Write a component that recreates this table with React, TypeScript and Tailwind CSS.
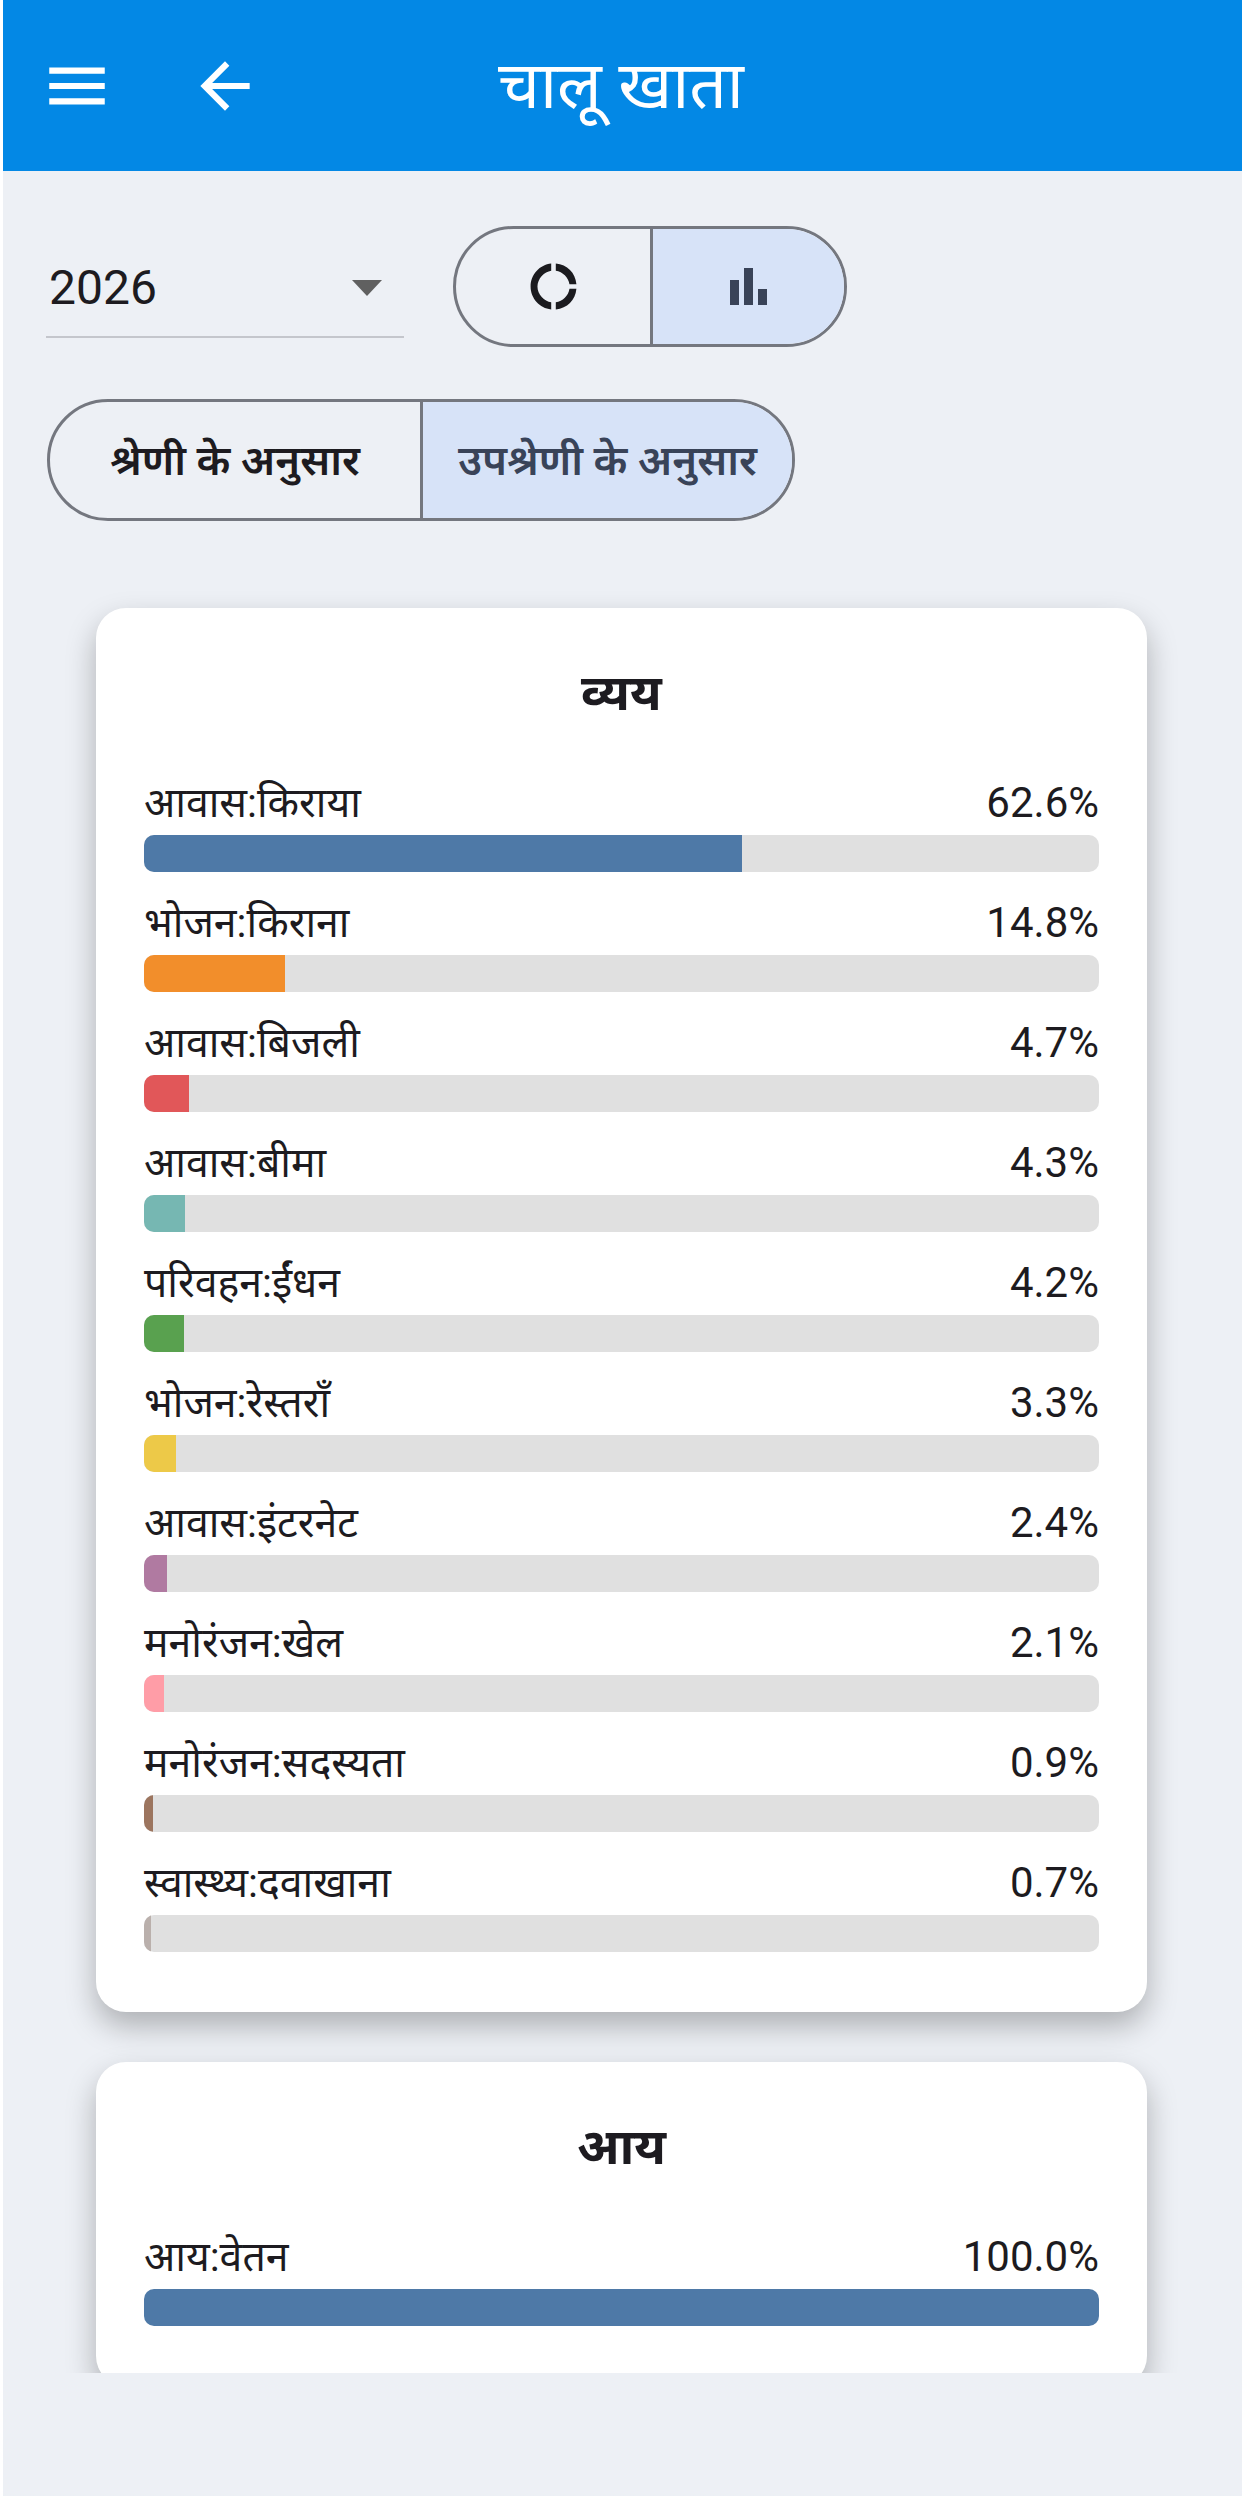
import React from "react";

type Row = { label: string; pct: number; color: string };

const expenses: Row[] = [
  { label: "आवास:किराया", pct: 62.6, color: "#4e79a7" },
  { label: "भोजन:किराना", pct: 14.8, color: "#f28e2b" },
  { label: "आवास:बिजली", pct: 4.7, color: "#e15759" },
  { label: "आवास:बीमा", pct: 4.3, color: "#76b7b2" },
  { label: "परिवहन:ईंधन", pct: 4.2, color: "#59a14f" },
  { label: "भोजन:रेस्तराँ", pct: 3.3, color: "#edc948" },
  { label: "आवास:इंटरनेट", pct: 2.4, color: "#b07aa1" },
  { label: "मनोरंजन:खेल", pct: 2.1, color: "#ff9da7" },
  { label: "मनोरंजन:सदस्यता", pct: 0.9, color: "#9c755f" },
  { label: "स्वास्थ्य:दवाखाना", pct: 0.7, color: "#bab0ac" },
];

const income: Row[] = [{ label: "आय:वेतन", pct: 100, color: "#4e79a7" }];

function Bars({ rows }: { rows: Row[] }) {
  return (
    <div className="mt-[54px] flex flex-col gap-[27px]">
      {rows.map((r) => (
        <div key={r.label}>
          <div className="flex h-[48px] items-center justify-between leading-[48px] text-[#1d1b20]">
            <span className="text-[41px]">{r.label}</span>
            <span className="text-[42px]">{r.pct.toFixed(1)}%</span>
          </div>
          <div className="mt-[8px] h-[37px] overflow-hidden rounded-[10px] bg-[#e0e0e0]">
            <div className="h-full" style={{ width: `${r.pct}%`, backgroundColor: r.color }} />
          </div>
        </div>
      ))}
    </div>
  );
}

function Card({ title, rows, last }: { title: string; rows: Row[]; last?: boolean }) {
  return (
    <div
      className={`ml-[96px] w-[1051px] rounded-[30px] bg-white px-[48px] pt-[53px] pb-[60px] shadow-[0_14px_30px_rgba(0,0,0,0.27)] ${
        last ? "mt-[50px]" : "mt-[87px]"
      }`}
    >
      <div className="flex h-[64px] items-center justify-center text-[50px] font-bold leading-none text-[#1d1b20]">
        {title}
      </div>
      <Bars rows={rows} />
    </div>
  );
}

export default function App() {
  return (
    <div className="relative h-[2496px] w-[1242px] overflow-hidden bg-[#edf0f5] font-['Roboto','Noto_Sans_Devanagari','Noto_Sans',sans-serif]">
      <div className="absolute left-0 top-0 z-10 h-full w-[3px] bg-white" />

      {/* app bar */}
      <header className="flex h-[171px] items-center bg-[#0388e5] text-white">
        <div className="flex w-[262px] items-center pl-[40px]">
          <svg width="74" height="74" viewBox="0 0 24 24" fill="white">
            <path d="M3 18h18v-2H3v2zm0-5h18v-2H3v2zm0-7v2h18V6H3z" />
          </svg>
          <svg width="74" height="74" viewBox="0 0 24 24" fill="white" className="ml-[74px]">
            <path d="M20 11H7.83l5.59-5.59L12 4l-8 8 8 8 1.41-1.41L7.830 13H20v-2z" />
          </svg>
        </div>
        <h1 className="flex-1 text-center text-[66px] font-normal leading-none">चालू खाता</h1>
        <div className="w-[262px]" />
      </header>

      <main className="h-[2202px] overflow-hidden">
        {/* year + chart type */}
        <div className="flex items-start pl-[46px] pt-[55px]">
          <div className="flex h-[112px] w-[358px] items-center justify-between border-b-2 border-[#c4c6cc] pt-[14px] pl-[3px] pr-[22px]">
            <span className="text-[48px] leading-none text-[#1d1b20]">2026</span>
            <svg width="30" height="16" viewBox="0 0 30 16">
              <path d="M0 0h30L15 16z" fill="#606060" />
            </svg>
          </div>
          <div className="ml-[49px] flex h-[121px] overflow-hidden rounded-full border-[3px] border-[#74777f]">
            <div className="flex w-[194px] items-center justify-center">
              <svg width="55" height="55" viewBox="0 0 24 24" fill="#1b1b1f">
                <path d="M11 5.08V2c-5 .5-9 4.81-9 10s4 9.5 9 10v-3.08c-3-.48-6-3.4-6-6.92s3-6.44 6-6.92zM18.97 11H22c-.47-5-4-8.53-9-9v3.08C16 5.51 18.54 8 18.97 11zM13 18.92V22c5-.47 8.53-4 9-9h-3.03c-.43 3-2.97 5.49-5.97 5.92z" />
              </svg>
            </div>
            <div className="flex w-[194px] items-center justify-center border-l-[3px] border-[#74777f] bg-[#d7e3f8]">
              <svg width="37" height="37" viewBox="0 0 37 37" fill="#394358">
                <rect x="0" y="12" width="9" height="25" />
                <rect x="14" y="0" width="9" height="37" />
                <rect x="28" y="21" width="9" height="16" />
              </svg>
            </div>
          </div>
        </div>

        {/* grouping */}
        <div className="ml-[47px] mt-[52px] flex h-[122px] w-fit overflow-hidden rounded-full border-[3px] border-[#74777f] text-[42px] font-semibold">
          <div className="flex w-[370px] items-center justify-center text-[#1d1b20]">श्रेणी के अनुसार</div>
          <div className="flex w-[372px] items-center justify-center border-l-[3px] border-[#74777f] bg-[#d7e3f8] text-[#394358]">
            उपश्रेणी के अनुसार
          </div>
        </div>

        <Card title="व्यय" rows={expenses} />
        <Card title="आय" rows={income} last />
      </main>
    </div>
  );
}
